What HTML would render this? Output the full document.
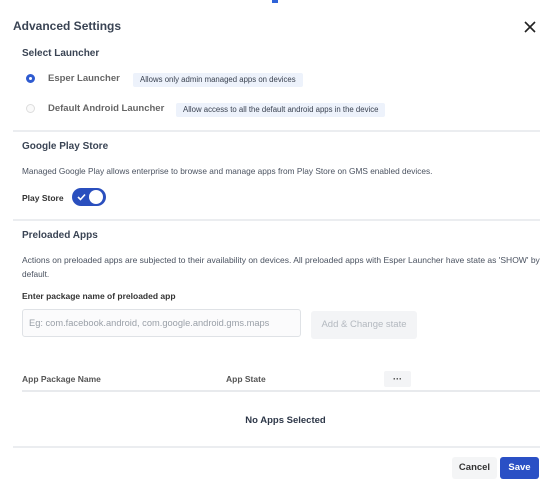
<!DOCTYPE html>
<html><head><style>
*{margin:0;padding:0;box-sizing:border-box}
body{width:551px;height:494px;background:#fff;font-family:"Liberation Sans",sans-serif;color:#2b3441;position:relative;overflow:hidden}
.a{position:absolute;white-space:nowrap}
.h{font-weight:bold;font-size:10px;color:#3a4454}
.s{font-size:8.3px;color:#4a5260}
.badge{position:absolute;white-space:nowrap;background:#edf2fb;border-radius:2px;font-size:7.8px;color:#3a4250;padding:0 7px;height:14px;line-height:14px}
.line{position:absolute;height:1px;background:#e4e6ea;left:13px;width:527px}
.radio{position:absolute;width:9px;height:9px;border-radius:50%}
</style></head><body>
<div class="a" style="left:272px;top:0;width:6px;height:3px;background:#2f63d8"></div>
<div class="a" style="left:13px;top:19px;font-size:12px;font-weight:bold;color:#3a4454">Advanced Settings</div>
<svg class="a" style="left:524px;top:21px" width="12" height="12" viewBox="0 0 12 12"><path d="M1 1L11 11M11 1L1 11" stroke="#222" stroke-width="1.6"/></svg>
<div class="a h" style="left:22px;top:48px">Select Launcher</div>
<div class="radio" style="left:26px;top:74px;background:#2f5bd0;border:1px solid #2f5bd0"><div style="width:3px;height:3px;background:#fff;border-radius:50%;margin:2px"></div></div>
<div class="a" style="left:48px;top:73px;font-size:9.5px;color:#666;font-weight:bold">Esper Launcher</div>
<div class="badge" style="left:133px;top:73px">Allows only admin managed apps on devices</div>
<div class="radio" style="left:26px;top:104px;border:1px solid #ddd;background:#fafafa"></div>
<div class="a" style="left:48px;top:103px;font-size:9.5px;color:#666;font-weight:bold">Default Android Launcher</div>
<div class="badge" style="left:176px;top:103px">Allow access to all the default android apps in the device</div>
<div class="line" style="top:130px;height:2px;background:#ebedf0"></div>
<div class="a h" style="left:22px;top:141px">Google Play Store</div>
<div class="a s" style="left:22px;top:166px">Managed Google Play allows enterprise to browse and manage apps from Play Store on GMS enabled devices.</div>
<div class="a" style="left:22px;top:193px;font-size:8.5px;font-weight:bold;color:#333">Play Store</div>
<div class="a" style="left:72px;top:188px;width:34px;height:18px;border-radius:9px;background:#2a4fbe">
<svg class="a" style="left:5px;top:5px" width="9" height="8" viewBox="0 0 9 8"><path d="M1 4L3.5 6.5L8 1.5" stroke="#fff" stroke-width="1.6" fill="none"/></svg>
<div class="a" style="left:17px;top:2px;width:14px;height:14px;border-radius:50%;background:#fff"></div></div>
<div class="line" style="top:219px;height:2px;background:#ebedf0"></div>
<div class="a h" style="left:22px;top:230px">Preloaded Apps</div>
<div class="a s" style="left:22px;top:255px;font-size:8.5px">Actions on preloaded apps are subjected to their availability on devices. All preloaded apps with Esper Launcher have state as 'SHOW' by</div>
<div class="a s" style="left:22px;top:269px">default.</div>
<div class="a" style="left:22px;top:291px;font-size:8.5px;font-weight:bold;color:#333">Enter package name of preloaded app</div>
<div class="a" style="left:22px;top:309px;width:279px;height:28px;border:1px solid #dfe2e6;border-radius:3px;background:#fbfbfc;font-size:9.3px;color:#9aa0a8;line-height:26px;padding-left:6px">Eg: com.facebook.android, com.google.android.gms.maps</div>
<div class="a" style="left:311px;top:311px;width:106px;height:28px;background:#f3f4f6;border-radius:3px;font-size:9.5px;color:#b3b8bf;line-height:28px;text-align:center">Add &amp; Change state</div>
<div class="a" style="left:22px;top:374px;font-size:8.5px;font-weight:bold;color:#555">App Package Name</div>
<div class="a" style="left:226px;top:374px;font-size:8.5px;font-weight:bold;color:#555">App State</div>
<div class="a" style="left:384px;top:371px;width:27px;height:16px;background:#f3f4f6;border-radius:2px;font-size:9px;text-align:center;line-height:16px;font-weight:bold;color:#333">···</div>
<div class="a" style="left:22px;top:390px;width:518px;height:2px;background:#e8eaed"></div>
<div class="a" style="left:10px;width:551px;top:415px;text-align:center;font-size:9.5px;font-weight:bold;color:#2d3748">No Apps Selected</div>
<div class="line" style="top:446px;height:2px;background:#ebedf0"></div>
<div class="a" style="left:452px;top:457px;width:45px;height:22px;background:#f4f5f6;border-radius:3px;font-size:9.5px;line-height:22px;text-align:center;color:#333;font-weight:bold">Cancel</div>
<div class="a" style="left:500px;top:457px;width:39px;height:22px;background:#2a50c5;border-radius:3px;font-size:9.5px;line-height:22px;text-align:center;color:#fff;font-weight:bold">Save</div>
</body></html>
